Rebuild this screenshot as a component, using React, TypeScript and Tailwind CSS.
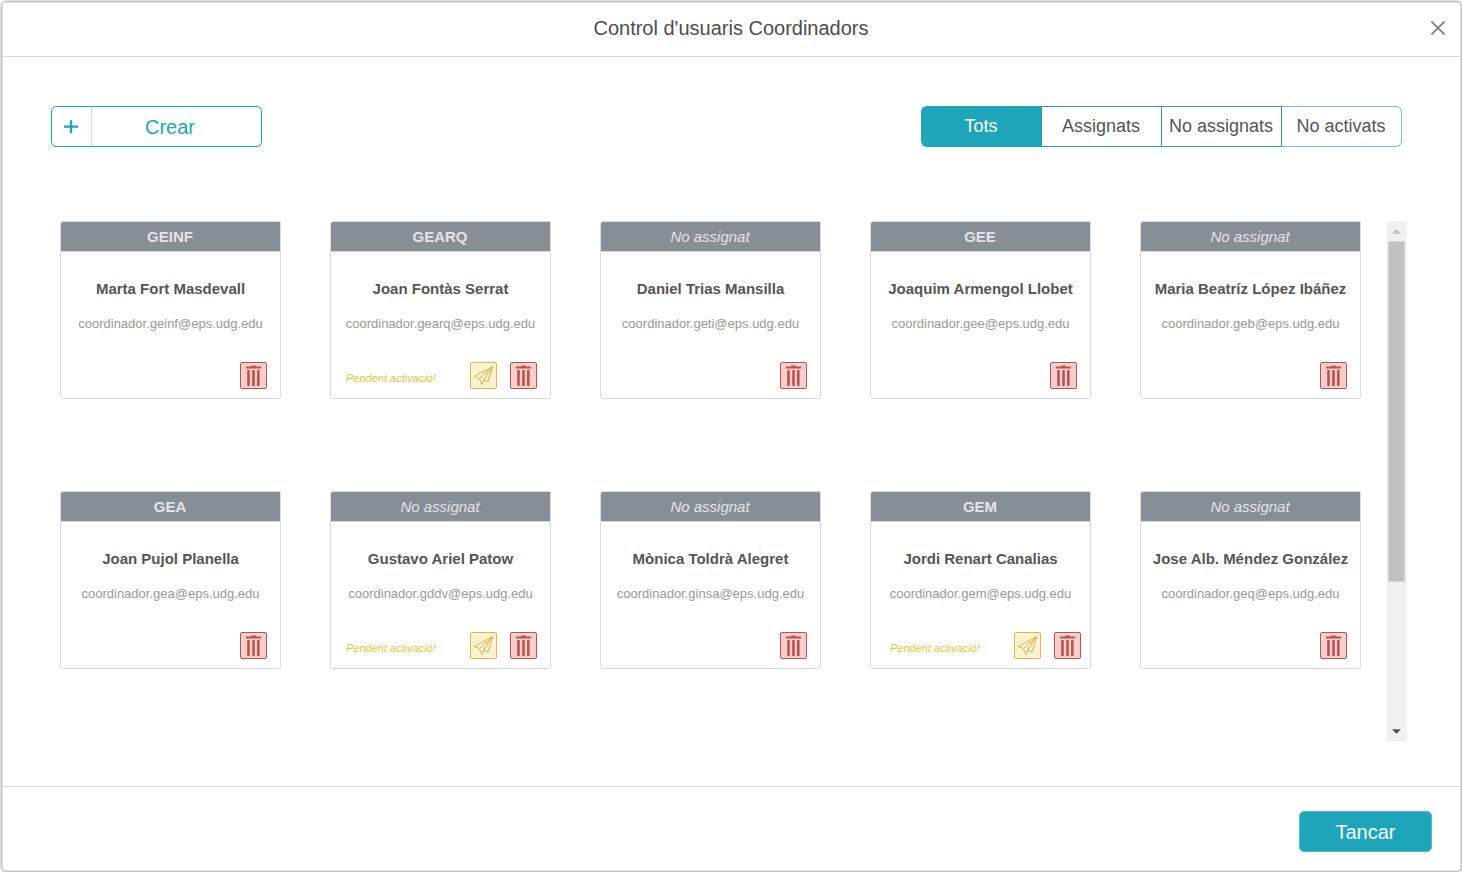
type User = { group?: string; name: string; email: string; pending?: boolean; inset?: boolean };

const users: User[] = [
  { group: 'GEINF', name: 'Marta Fort Masdevall', email: 'coordinador.geinf@eps.udg.edu' },
  { group: 'GEARQ', name: 'Joan Fontàs Serrat', email: 'coordinador.gearq@eps.udg.edu', pending: true },
  { name: 'Daniel Trias Mansilla', email: 'coordinador.geti@eps.udg.edu' },
  { group: 'GEE', name: 'Joaquim Armengol Llobet', email: 'coordinador.gee@eps.udg.edu' },
  { name: 'Maria Beatríz López Ibáñez', email: 'coordinador.geb@eps.udg.edu' },
  { group: 'GEA', name: 'Joan Pujol Planella', email: 'coordinador.gea@eps.udg.edu' },
  { name: 'Gustavo Ariel Patow', email: 'coordinador.gddv@eps.udg.edu', pending: true },
  { name: 'Mònica Toldrà Alegret', email: 'coordinador.ginsa@eps.udg.edu' },
  { group: 'GEM', name: 'Jordi Renart Canalias', email: 'coordinador.gem@eps.udg.edu', pending: true, inset: true },
  { name: 'Jose Alb. Méndez González', email: 'coordinador.geq@eps.udg.edu' },
];

function TrashIcon() {
  return (
    <svg width="25" height="25" viewBox="1 1 25 25" fill="#b85450">
      <path d="M11.2 3.4h4.6v1.2h5.2v1.9H6V4.6h5.2z" />
      <rect x="7.2" y="8" width="2.6" height="16" rx="0.8" />
      <rect x="12.2" y="8" width="2.6" height="16" rx="0.8" />
      <rect x="17" y="8" width="2.6" height="16" rx="0.8" />
    </svg>
  );
}

function SendIcon() {
  return (
    <svg width="25" height="25" viewBox="1 1 25 25" fill="none" stroke="#d6b656" strokeWidth="1" strokeLinejoin="round">
      <path d="M22.7 4.5L4.4 14.3l5 2.4z" />
      <path d="M9.4 16.7l2.6 5.7 1.9-4.5" />
      <path d="M22.7 4.5l-8.8 13.4 4.2 1.9z" />
    </svg>
  );
}

function Card({ user }: { user: User }) {
  return (
    <article className="flex h-[178px] w-[221px] flex-col rounded-[3px] rounded-tr-none border border-[#d9dbdd] bg-white">
      <header
        className={`flex h-[30px] items-center justify-center rounded-tl-[2px] border-b border-[#d5d8da] bg-[#868e96] pr-px text-[15px] leading-none text-[#e1e4e8] ${user.group ? 'font-bold' : 'italic'}`}
      >
        {user.group ?? 'No assignat'}
      </header>
      <h2 className="mt-[27px] text-center text-[15px] leading-5 font-bold whitespace-nowrap text-[#555555]">{user.name}</h2>
      <p className="mt-[15px] text-center text-[13px] leading-5 whitespace-nowrap text-[#999999]">{user.email}</p>
      <div className={`mt-auto mb-[9px] flex items-center ${user.inset ? 'pr-[9px] pl-[19px]' : 'pr-[13px] pl-[15px]'}`}>
        {user.pending && (
          <span className="pt-[5px] text-[11px] leading-4 whitespace-nowrap text-[#e8c33f] italic">Pendent activació!</span>
        )}
        <div className="ml-auto flex gap-[13px]">
          {user.pending && (
            <button className="size-[27px] rounded-[2px] border border-[#d6b656] bg-[#fff2cc]">
              <SendIcon />
            </button>
          )}
          <button className="size-[27px] rounded-[2px] border border-[#b85450] bg-[#f8cecc]">
            <TrashIcon />
          </button>
        </div>
      </div>
    </article>
  );
}

export default function App() {
  return (
    <div className="h-[872px] w-[1462px] overflow-hidden bg-[#fdfdfd] pt-px pl-px font-['Liberation_Sans',Arial,sans-serif]">
      <div className="flex h-[871px] flex-col rounded-[5px] border border-[#c4c4c4] bg-white shadow-[0_0_0_1px_#e2e2e2,inset_0_0_0_1px_#e2e2e2]">
        <header className="flex h-[55px] shrink-0 items-center border-b border-[#d9d9d9] pr-[15px] pb-[2px] pl-[30px]">
          <h1 className="grow text-center text-[20px] leading-6 text-[#4d4d4d]">Control d'usuaris Coordinadors</h1>
          <button className="size-4">
            <svg width="16" height="16" viewBox="0 0 16 16" fill="none" stroke="#808080" strokeWidth="1.8">
              <path d="M1.4 1.4l13.2 13.2M14.6 1.4L1.4 14.6" />
            </svg>
          </button>
        </header>

        <main className="flex grow flex-col pt-[49px] pr-[54px] pl-[49px]">
          <div className="flex justify-between pr-[5px]">
            <button className="flex h-[41px] w-[211px] rounded-[5px] border border-[#1ea5b9] text-[#1ea5b9]">
              <span className="flex w-10 items-center justify-center border-r border-[#c0e2e6] pr-[2px]">
                <svg width="14" height="14" viewBox="0 0 14 14" stroke="#1ea5b9" strokeWidth="2.4">
                  <path d="M0 6.6h14M7 .2v13" />
                </svg>
              </span>
              <span className="flex h-full grow items-center justify-center pr-[13px] text-[20px]">Crear</span>
            </button>
            <nav className="flex h-[41px] w-[481px] text-[18px] text-[#555555]">
              <button className="w-[120px] rounded-l-[6px] bg-[#1ea5b9] pb-px text-white">Tots</button>
              <button className="w-[121px] border border-[#3199a9] pr-px">Assignats</button>
              <button className="w-[120px] border-y border-r border-[#3199a9] pr-px whitespace-nowrap">No assignats</button>
              <button className="w-[120px] rounded-r-[6px] border-y border-r border-[#74c2cc] pr-px">No activats</button>
            </nav>
          </div>

          <div className="mt-[74px] flex justify-between">
            <section className="ml-[9px] grid grid-cols-[repeat(5,221px)] content-start gap-x-[49px] gap-y-[92px]">
              {users.map((user) => (
                <Card key={user.email} user={user} />
              ))}
            </section>
            <div className="flex h-[521px] w-[21px] flex-col items-center border border-[#f6f6f6] bg-[#f0f0f0]">
              <svg className="mt-[7px]" width="9" height="5" viewBox="0 0 10 5" fill="#bdbdbd">
                <path d="M0 5L5 0l5 5z" />
              </svg>
              <div className="mt-[7px] h-[341px] w-[17px] border border-[#d4d4d4] bg-[#c1c1c1]" />
              <svg className="mt-auto mb-[7px]" width="9" height="5" viewBox="0 0 10 5" fill="#505050">
                <path d="M0 0h10L5 5z" />
              </svg>
            </div>
          </div>
        </main>

        <footer className="flex h-[85px] shrink-0 items-start justify-end border-t border-[#d9d9d9] pt-[24px] pr-[29px]">
          <button className="h-[41px] w-[133px] rounded-[5px] border border-[#52b9c8] bg-[#1ea5b9] text-[20px] text-white">Tancar</button>
        </footer>
      </div>
    </div>
  );
}
